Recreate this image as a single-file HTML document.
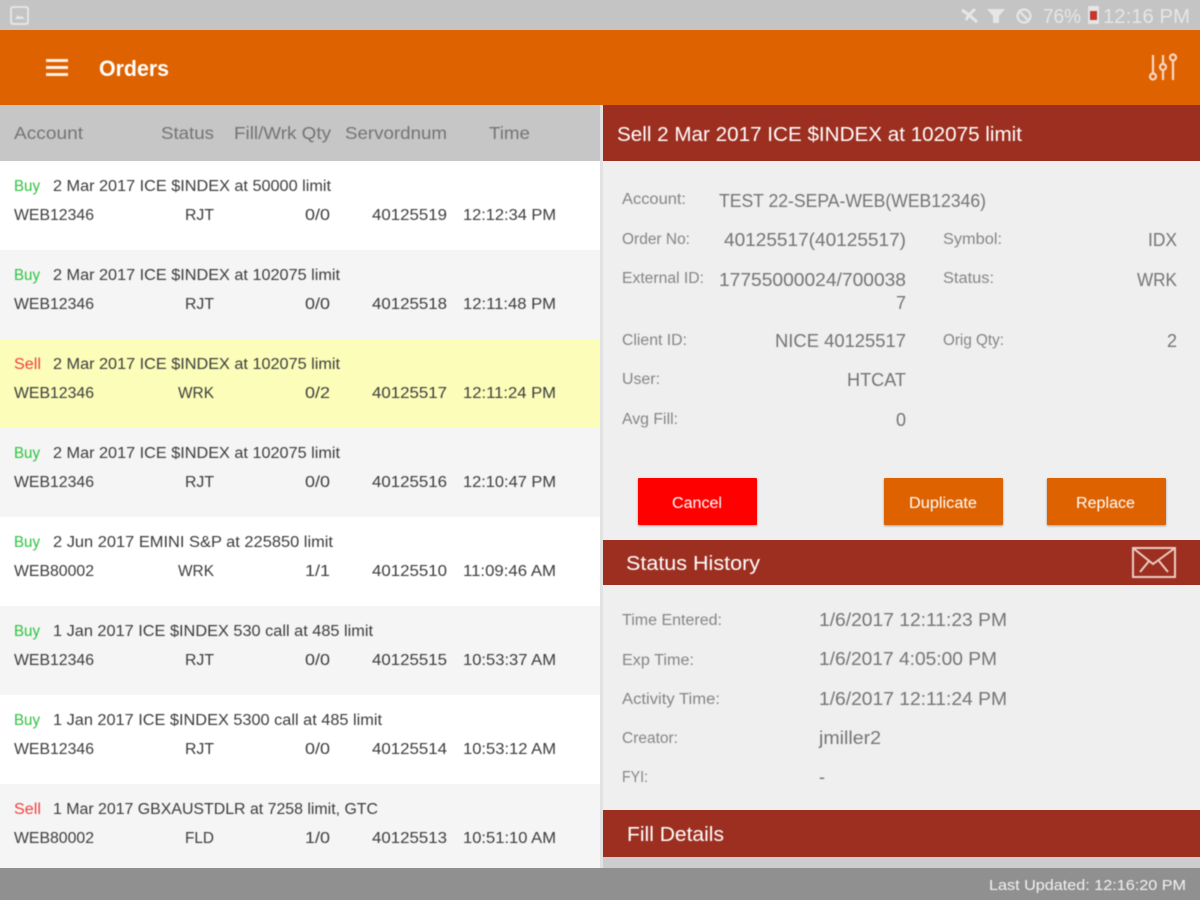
<!DOCTYPE html>
<html><head><meta charset="utf-8"><title>Orders</title>
<style>
html,body{margin:0;padding:0;width:1200px;height:900px;overflow:hidden;background:#fff}
svg{display:block}
text{font-family:"Liberation Sans",sans-serif}
.t{filter:blur(.5px)}
.r{font-size:15.5px;fill:#3c3c3c}
.h{font-size:17.5px;fill:#747474}
.l{font-size:15.5px;fill:#858585}
.v{font-size:18px;fill:#747474}
.w{fill:#fff}
</style></head><body>
<svg width="1200" height="900" viewBox="0 0 1200 900" xmlns="http://www.w3.org/2000/svg">
<defs><filter id="s" x="-5%" y="-5%" width="110%" height="125%"><feDropShadow dx="0" dy="1" stdDeviation="1" flood-color="#000" flood-opacity=".35"/></filter></defs>
<rect width="1200" height="30" fill="#c4c4c4"/>
<rect y="30" width="1200" height="75" fill="#de6200"/>
<rect y="105" width="600" height="56" fill="#c6c6c6"/>
<rect y="161" width="600" height="89" fill="#fff"/>
<rect y="250" width="600" height="89" fill="#f5f5f5"/>
<rect y="339" width="600" height="89" fill="#fbfdb9"/>
<rect y="428" width="600" height="89" fill="#f5f5f5"/>
<rect y="517" width="600" height="89" fill="#fff"/>
<rect y="606" width="600" height="89" fill="#f5f5f5"/>
<rect y="695" width="600" height="89" fill="#fff"/>
<rect y="784" width="600" height="84" fill="#f5f5f5"/>
<rect x="600" y="105" width="3" height="763" fill="#e2e2e2"/>
<rect x="603" y="161" width="597" height="707" fill="#efefef"/>
<rect x="603" y="105" width="597" height="56" fill="#9c2f20"/>
<rect x="603" y="540" width="597" height="45" fill="#9c2f20"/>
<rect x="603" y="810" width="597" height="47" fill="#9c2f20"/>
<rect x="603" y="857" width="597" height="11" fill="#cdcdd0"/>
<rect y="868" width="1200" height="32" fill="#909090"/>
<rect x="638" y="478" width="119" height="47" rx="1" fill="#ff0000" filter="url(#s)"/>
<rect x="884" y="478" width="119" height="47" rx="1" fill="#de6200" filter="url(#s)"/>
<rect x="1047" y="478" width="119" height="47" rx="1" fill="#de6200" filter="url(#s)"/>

<g class="t">
<!-- status bar icons -->
<g fill="none" stroke="#e6e6e6">
<rect x="11" y="7" width="17" height="17" rx="2" stroke-width="2"/>
<path d="M15 19l3-4 2 2 2-1 3 3z" fill="#e6e6e6" stroke="none"/>
<path d="M962 10l7 5 6-6M969 15l-3 5M969 15l8 7" stroke-width="3"/>
<path d="M987 9h18l-6 7v7h-6v-7z" fill="#e6e6e6" stroke="none"/>
<circle cx="1024" cy="16" r="6.5" stroke-width="2.2"/>
<path d="M1019.500 11.500l9 9" stroke-width="2.2"/>
</g>
<rect x="1088" y="6" width="11" height="18" rx="1" fill="#e6e6e6"/>
<rect x="1090" y="11" width="7" height="9" fill="#c0392b"/>
<text x="1043" y="23" font-size="20" fill="#e6e6e6" textLength="38" lengthAdjust="spacingAndGlyphs">76%</text>
<text x="1103" y="23" font-size="20" fill="#e6e6e6" textLength="87" lengthAdjust="spacingAndGlyphs">12:16 PM</text>

<!-- app bar -->
<path d="M46 60.500h22M46 67.500h22M46 74.500h22" stroke="#fff0e8" stroke-width="3" fill="none"/>
<text x="99" y="76" font-size="22" font-weight="bold" fill="#fff" textLength="70" lengthAdjust="spacingAndGlyphs">Orders</text>
<g fill="none" stroke="#f8d8c4" stroke-width="2.200">
<path d="M1153 55v18M1163 55v8M1163 71v9M1173 60.500v19.500"/>
<circle cx="1153" cy="76.500" r="3"/><circle cx="1163" cy="67" r="3"/><circle cx="1173" cy="57.500" r="3"/>
</g>

<!-- list header -->
<text class="h" x="14" y="139" textLength="69" lengthAdjust="spacingAndGlyphs">Account</text>
<text class="h" x="161" y="139" textLength="53" lengthAdjust="spacingAndGlyphs">Status</text>
<text class="h" x="234" y="139" textLength="97" lengthAdjust="spacingAndGlyphs">Fill/Wrk Qty</text>
<text class="h" x="345" y="139" textLength="102" lengthAdjust="spacingAndGlyphs">Servordnum</text>
<text class="h" x="489" y="139" textLength="41" lengthAdjust="spacingAndGlyphs">Time</text>

<!-- rows -->
<g class="r">
<text x="14" y="191" style="fill:#2fc23f" textLength="26" lengthAdjust="spacingAndGlyphs">Buy</text>
<text x="53" y="191" textLength="278" lengthAdjust="spacingAndGlyphs">2 Mar 2017 ICE $INDEX at 50000 limit</text>
<text x="14" y="220" textLength="80" lengthAdjust="spacingAndGlyphs">WEB12346</text>
<text x="185" y="220" textLength="29" lengthAdjust="spacingAndGlyphs">RJT</text>
<text x="305" y="220" textLength="25" lengthAdjust="spacingAndGlyphs">0/0</text>
<text x="372" y="220" textLength="75" lengthAdjust="spacingAndGlyphs">40125519</text>
<text x="463" y="220" textLength="93" lengthAdjust="spacingAndGlyphs">12:12:34 PM</text>

<text x="14" y="280" style="fill:#2fc23f" textLength="26" lengthAdjust="spacingAndGlyphs">Buy</text>
<text x="53" y="280" textLength="287" lengthAdjust="spacingAndGlyphs">2 Mar 2017 ICE $INDEX at 102075 limit</text>
<text x="14" y="309" textLength="80" lengthAdjust="spacingAndGlyphs">WEB12346</text>
<text x="185" y="309" textLength="29" lengthAdjust="spacingAndGlyphs">RJT</text>
<text x="305" y="309" textLength="25" lengthAdjust="spacingAndGlyphs">0/0</text>
<text x="372" y="309" textLength="75" lengthAdjust="spacingAndGlyphs">40125518</text>
<text x="463" y="309" textLength="93" lengthAdjust="spacingAndGlyphs">12:11:48 PM</text>

<text x="14" y="369" style="fill:#f04040" textLength="27" lengthAdjust="spacingAndGlyphs">Sell</text>
<text x="53" y="369" textLength="287" lengthAdjust="spacingAndGlyphs">2 Mar 2017 ICE $INDEX at 102075 limit</text>
<text x="14" y="398" textLength="80" lengthAdjust="spacingAndGlyphs">WEB12346</text>
<text x="178" y="398" textLength="36" lengthAdjust="spacingAndGlyphs">WRK</text>
<text x="305" y="398" textLength="25" lengthAdjust="spacingAndGlyphs">0/2</text>
<text x="372" y="398" textLength="75" lengthAdjust="spacingAndGlyphs">40125517</text>
<text x="463" y="398" textLength="93" lengthAdjust="spacingAndGlyphs">12:11:24 PM</text>

<text x="14" y="458" style="fill:#2fc23f" textLength="26" lengthAdjust="spacingAndGlyphs">Buy</text>
<text x="53" y="458" textLength="287" lengthAdjust="spacingAndGlyphs">2 Mar 2017 ICE $INDEX at 102075 limit</text>
<text x="14" y="487" textLength="80" lengthAdjust="spacingAndGlyphs">WEB12346</text>
<text x="185" y="487" textLength="29" lengthAdjust="spacingAndGlyphs">RJT</text>
<text x="305" y="487" textLength="25" lengthAdjust="spacingAndGlyphs">0/0</text>
<text x="372" y="487" textLength="75" lengthAdjust="spacingAndGlyphs">40125516</text>
<text x="463" y="487" textLength="93" lengthAdjust="spacingAndGlyphs">12:10:47 PM</text>

<text x="14" y="547" style="fill:#2fc23f" textLength="26" lengthAdjust="spacingAndGlyphs">Buy</text>
<text x="53" y="547" textLength="280" lengthAdjust="spacingAndGlyphs">2 Jun 2017 EMINI S&amp;P at 225850 limit</text>
<text x="14" y="576" textLength="80" lengthAdjust="spacingAndGlyphs">WEB80002</text>
<text x="178" y="576" textLength="36" lengthAdjust="spacingAndGlyphs">WRK</text>
<text x="305" y="576" textLength="25" lengthAdjust="spacingAndGlyphs">1/1</text>
<text x="372" y="576" textLength="75" lengthAdjust="spacingAndGlyphs">40125510</text>
<text x="463" y="576" textLength="93" lengthAdjust="spacingAndGlyphs">11:09:46 AM</text>

<text x="14" y="636" style="fill:#2fc23f" textLength="26" lengthAdjust="spacingAndGlyphs">Buy</text>
<text x="53" y="636" textLength="320" lengthAdjust="spacingAndGlyphs">1 Jan 2017 ICE $INDEX 530 call at 485 limit</text>
<text x="14" y="665" textLength="80" lengthAdjust="spacingAndGlyphs">WEB12346</text>
<text x="185" y="665" textLength="29" lengthAdjust="spacingAndGlyphs">RJT</text>
<text x="305" y="665" textLength="25" lengthAdjust="spacingAndGlyphs">0/0</text>
<text x="372" y="665" textLength="75" lengthAdjust="spacingAndGlyphs">40125515</text>
<text x="463" y="665" textLength="93" lengthAdjust="spacingAndGlyphs">10:53:37 AM</text>

<text x="14" y="725" style="fill:#2fc23f" textLength="26" lengthAdjust="spacingAndGlyphs">Buy</text>
<text x="53" y="725" textLength="329" lengthAdjust="spacingAndGlyphs">1 Jan 2017 ICE $INDEX 5300 call at 485 limit</text>
<text x="14" y="754" textLength="80" lengthAdjust="spacingAndGlyphs">WEB12346</text>
<text x="185" y="754" textLength="29" lengthAdjust="spacingAndGlyphs">RJT</text>
<text x="305" y="754" textLength="25" lengthAdjust="spacingAndGlyphs">0/0</text>
<text x="372" y="754" textLength="75" lengthAdjust="spacingAndGlyphs">40125514</text>
<text x="463" y="754" textLength="93" lengthAdjust="spacingAndGlyphs">10:53:12 AM</text>

<text x="14" y="814" style="fill:#f04040" textLength="27" lengthAdjust="spacingAndGlyphs">Sell</text>
<text x="53" y="814" textLength="325" lengthAdjust="spacingAndGlyphs">1 Mar 2017 GBXAUSTDLR at 7258 limit, GTC</text>
<text x="14" y="843" textLength="80" lengthAdjust="spacingAndGlyphs">WEB80002</text>
<text x="185" y="843" textLength="29" lengthAdjust="spacingAndGlyphs">FLD</text>
<text x="305" y="843" textLength="25" lengthAdjust="spacingAndGlyphs">1/0</text>
<text x="372" y="843" textLength="75" lengthAdjust="spacingAndGlyphs">40125513</text>
<text x="463" y="843" textLength="93" lengthAdjust="spacingAndGlyphs">10:51:10 AM</text>
</g>

<!-- detail -->
<text x="617" y="141" font-size="20" fill="#fff" textLength="405" lengthAdjust="spacingAndGlyphs">Sell 2 Mar 2017 ICE $INDEX at 102075 limit</text>
<text class="l" x="622" y="204" textLength="64" lengthAdjust="spacingAndGlyphs">Account:</text>
<text class="v" x="719" y="207" textLength="267" lengthAdjust="spacingAndGlyphs">TEST 22-SEPA-WEB(WEB12346)</text>
<text class="l" x="622" y="244" textLength="68" lengthAdjust="spacingAndGlyphs">Order No:</text>
<text class="v" x="724" y="246" textLength="182" lengthAdjust="spacingAndGlyphs">40125517(40125517)</text>
<text class="l" x="943" y="244" textLength="59" lengthAdjust="spacingAndGlyphs">Symbol:</text>
<text class="v" x="1148" y="246" textLength="29" lengthAdjust="spacingAndGlyphs">IDX</text>
<text class="l" x="622" y="283" textLength="82" lengthAdjust="spacingAndGlyphs">External ID:</text>
<text class="v" x="719" y="286" textLength="187" lengthAdjust="spacingAndGlyphs">17755000024/700038</text>
<text class="v" x="896" y="309">7</text>
<text class="l" x="943" y="283" textLength="51" lengthAdjust="spacingAndGlyphs">Status:</text>
<text class="v" x="1137" y="286" textLength="40" lengthAdjust="spacingAndGlyphs">WRK</text>
<text class="l" x="622" y="345" textLength="65" lengthAdjust="spacingAndGlyphs">Client ID:</text>
<text class="v" x="775" y="347" textLength="131" lengthAdjust="spacingAndGlyphs">NICE 40125517</text>
<text class="l" x="943" y="345" textLength="61" lengthAdjust="spacingAndGlyphs">Orig Qty:</text>
<text class="v" x="1167" y="347">2</text>
<text class="l" x="622" y="384" textLength="38" lengthAdjust="spacingAndGlyphs">User:</text>
<text class="v" x="847" y="386" textLength="59" lengthAdjust="spacingAndGlyphs">HTCAT</text>
<text class="l" x="622" y="424" textLength="56" lengthAdjust="spacingAndGlyphs">Avg Fill:</text>
<text class="v" x="896" y="426">0</text>

<text class="w" x="672" y="508" font-size="15.500" textLength="50" lengthAdjust="spacingAndGlyphs">Cancel</text>
<text class="w" x="909" y="508" font-size="15.500" textLength="68" lengthAdjust="spacingAndGlyphs">Duplicate</text>
<text class="w" x="1076" y="508" font-size="15.500" textLength="59" lengthAdjust="spacingAndGlyphs">Replace</text>

<text class="w" x="626" y="570" font-size="20" textLength="134" lengthAdjust="spacingAndGlyphs">Status History</text>
<g fill="none" stroke="#eccdc6" stroke-width="2">
<rect x="1133" y="548" width="42" height="29"/>
<path d="M1133 548l20 16 22-16M1140 572l9-11M1168 572l-9-11"/>
</g>

<text class="l" x="622" y="625" textLength="100" lengthAdjust="spacingAndGlyphs">Time Entered:</text>
<text class="v" x="819" y="626" textLength="188" lengthAdjust="spacingAndGlyphs">1/6/2017 12:11:23 PM</text>
<text class="l" x="622" y="665" textLength="72" lengthAdjust="spacingAndGlyphs">Exp Time:</text>
<text class="v" x="819" y="665" textLength="178" lengthAdjust="spacingAndGlyphs">1/6/2017 4:05:00 PM</text>
<text class="l" x="622" y="704" textLength="98" lengthAdjust="spacingAndGlyphs">Activity Time:</text>
<text class="v" x="819" y="705" textLength="188" lengthAdjust="spacingAndGlyphs">1/6/2017 12:11:24 PM</text>
<text class="l" x="622" y="743" textLength="56" lengthAdjust="spacingAndGlyphs">Creator:</text>
<text class="v" x="819" y="744" textLength="62" lengthAdjust="spacingAndGlyphs">jmiller2</text>
<text class="l" x="622" y="782" font-size="16" textLength="26" lengthAdjust="spacingAndGlyphs">FYI:</text>
<text class="v" x="819" y="783">-</text>

<text class="w" x="627" y="841" font-size="20" textLength="97" lengthAdjust="spacingAndGlyphs">Fill Details</text>
<text x="989" y="890" font-size="15" fill="#f2f2f2" textLength="197" lengthAdjust="spacingAndGlyphs">Last Updated: 12:16:20 PM</text>
</g>
</svg>
</body></html>
